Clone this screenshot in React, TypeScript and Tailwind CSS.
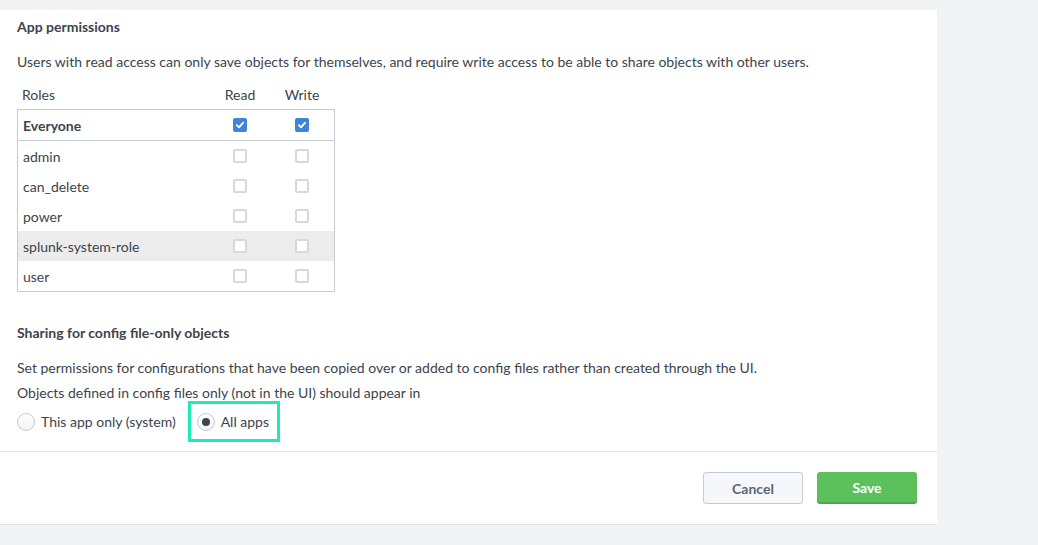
import React, { useState } from 'react';

const roles = [
  { name: 'Everyone', read: true, write: true, bold: true },
  { name: 'admin', read: false, write: false },
  { name: 'can_delete', read: false, write: false },
  { name: 'power', read: false, write: false },
  { name: 'splunk-system-role', read: false, write: false, hover: true },
  { name: 'user', read: false, write: false },
];

const Checkbox = ({ checked }: { checked: boolean }) =>
  checked ? (
    <span className="w-[14px] h-[14px] rounded-[2px] bg-[#3d85d8] flex items-center justify-center">
      <svg width="10" height="10" viewBox="0 0 10 10" fill="none">
        <path d="M1.8 5.2 L4 7.3 L8.2 2.6" stroke="white" strokeWidth="1.8" strokeLinecap="round" strokeLinejoin="round" />
      </svg>
    </span>
  ) : (
    <span className="w-[14px] h-[14px] rounded-[2px] border-2 border-[#d5d9de] bg-white" />
  );

const Radio = ({ checked }: { checked: boolean }) => (
  <span className="w-[18px] h-[18px] rounded-full border border-[#c3cbd4] bg-gradient-to-b from-white to-[#f2f3f5] flex items-center justify-center">
    {checked && <span className="w-[8px] h-[8px] rounded-full bg-[#3c444d]" />}
  </span>
);

export default function App() {
  const [allApps] = useState(true);

  return (
    <div className="w-full h-[545px] bg-[#f2f3f5] pt-[10px] text-[14px] text-[#3c444d]" style={{ fontFamily: 'Lato, "Open Sans", sans-serif' }}>
      <div className="w-[937px] bg-white border-b border-[#e1e4e8]">
        <div className="px-[17px] pt-[8px] pb-[9px]">
          <h2 className="font-bold leading-[18px]">App permissions</h2>
          <p className="mt-[17px] leading-[18px]">
            Users with read access can only save objects for themselves, and require write access to be able to share objects with other users.
          </p>

          <div className="mt-[8px] w-[318px]">
            <div className="flex h-[30px] items-center">
              <div className="w-[192px] pl-[5px]">Roles</div>
              <div className="w-[62px] text-center">Read</div>
              <div className="w-[62px] text-center">Write</div>
            </div>
            <div className="border border-[#c3cbd4]">
              {roles.map((r, i) => (
                <div
                  key={r.name}
                  className={`flex h-[30px] items-center ${i === 0 ? 'border-b border-[#c3cbd4] h-[31px]' : ''} ${r.hover ? 'bg-[#ececec]' : ''}`}
                >
                  <div className={`w-[191px] pl-[5px] ${r.bold ? 'font-bold' : ''}`}>{r.name}</div>
                  <div className="w-[62px] flex justify-center">
                    <Checkbox checked={r.read} />
                  </div>
                  <div className="w-[62px] flex justify-center">
                    <Checkbox checked={r.write} />
                  </div>
                </div>
              ))}
            </div>
          </div>

          <h2 className="mt-[32px] font-bold leading-[18px]">Sharing for config file-only objects</h2>
          <p className="mt-[17px] leading-[18px]">
            Set permissions for configurations that have been copied over or added to config files rather than created through the UI.
          </p>
          <p className="mt-[7px] leading-[18px]">Objects defined in config files only (not in the UI) should appear in</p>

          <div className="flex items-center h-[41px] mt-[-1px]">
            <label className="flex items-center gap-[6px]">
              <Radio checked={!allApps} />
              <span>This app only (system)</span>
            </label>
            <label className="ml-[12px] h-[41px] flex items-center gap-[6px] border-[3px] border-[#1eecb4] pl-[6px] pr-[8px]">
              <Radio checked={allApps} />
              <span>All apps</span>
            </label>
          </div>
        </div>

        <div className="border-t border-[#e1e4e8] flex justify-end gap-[14px] pt-[20px] pb-[20px] pr-[20px]">
          <button className="w-[100px] h-[32px] rounded-[3px] border border-[#c3cbd4] bg-[#f5f7fa] text-[#5c6773] font-bold">
            Cancel
          </button>
          <button className="w-[100px] h-[32px] rounded-[3px] bg-[#5cc05c] border-b-2 border-[#4aa84a] text-white font-bold">
            Save
          </button>
        </div>
      </div>
    </div>
  );
}
